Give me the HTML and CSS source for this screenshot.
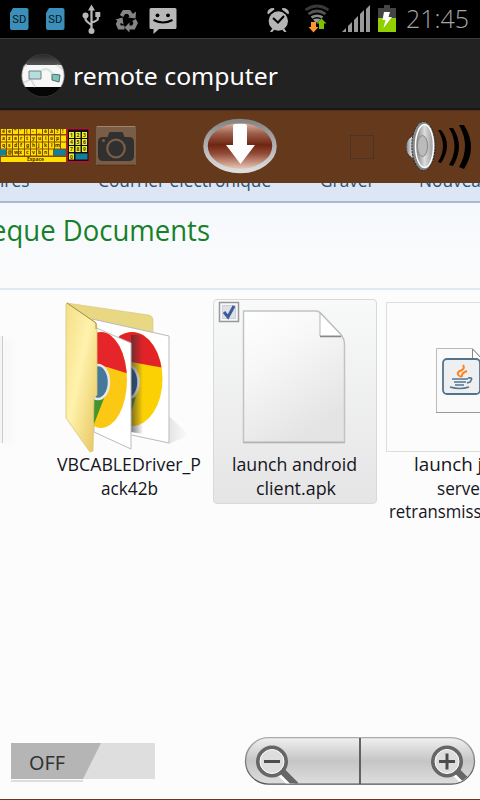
FILE: index.html
```html
<!DOCTYPE html>
<html lang="fr">
<head>
<meta charset="utf-8">
<title>remote computer</title>
<link rel="stylesheet" href="styles.css">
</head>
<body>
<div class="screen">
  <div class="status">
    <svg class="status-icons" width="190" height="38" viewBox="0 0 190 38">
      <g fill="#3b8fb8"><path d="M13 8h13.500q2 0 2 2v18q0 2-2 2h-14.500q-2 0-2-2v-15z"/><path d="M49 8h13.500q2 0 2 2v18q0 2-2 2h-14.500q-2 0-2-2v-15z"/></g>
      <g class="sd"><text x="12.300" y="22.800" textLength="14" lengthAdjust="spacingAndGlyphs">SD</text><text x="48.300" y="22.800" textLength="14" lengthAdjust="spacingAndGlyphs">SD</text></g>
      <g fill="none" stroke="#b8b8b8" stroke-width="2.200"><path d="M91.500 9v22M85.500 16v3q0 2 6 6M97.800 14v5q0 1.500-6 3.500"/></g>
      <g fill="#b8b8b8"><path d="M91.500 4.500l3.500 6h-7z"/><circle cx="85.500" cy="15.500" r="3"/><path d="M95.300 12h5v5h-5z"/><circle cx="91.500" cy="31" r="3"/></g>
      <g fill="none" stroke="#858585" stroke-width="4"><path d="M121.500 16l2.500-4h5l2.500 3.500M134 20l1.700 3-2.200 4.500h-5M124.500 27.500h-5l-1.500-3.500 1.500-3"/></g>
      <path d="M128 17.500l7.500 1 .5-7zM129.500 22.500v10l-5-5zM115.500 19.500l7-2 1 7z" fill="#858585"/>
      <path d="M151 8h24q1.500 0 1.500 1.500v18q0 1.500-1.500 1.500h-16l-5.500 5v-5h-2.500q-1.500 0-1.500-1.500v-18q0-1.500 1.500-1.500z" fill="#b8b8b8"/>
      <circle cx="157.500" cy="15.300" r="1.900"/><circle cx="168" cy="15.300" r="1.900"/><path d="M153.500 20q9.500 5 19 0" fill="none" stroke="#000" stroke-width="2"/>
    </svg>
    <svg class="status-icons" width="140" height="38" viewBox="260 0 140 38">
      <g fill="#b5b5b5"><circle cx="278.300" cy="21" r="9.700"/><path d="M267.300 13.500q0-5.500 6.500-5.500l.8 1.300-6.300 5zM289 13.500q0-5.500-6.500-5.500l-.8 1.300 6.300 5zM270 32l2.500-4 2 1.500-2.300 2.500zM286.500 32l-2.500-4-2 1.500 2.300 2.500z"/></g>
      <path d="M273 18l5 4.500 6-6.500" fill="none" stroke="#000" stroke-width="2"/>
      <g fill="none" stroke-width="2.700"><path d="M305.500 10q11.500-8 23 0" stroke="#393939"/><path d="M308.500 14q8.500-6 17 0" stroke="#555"/><path d="M311.500 17.500q5.500-3.500 11 0" stroke="#898989"/></g>
      <path d="M313 19.500q4-2 7.500 0l-3 3h-2z" fill="#999"/>
      <path d="M311 22h5v5h2.500l-5 5.500-5-5.500h2.500z" fill="#ff952f"/><path d="M319 29v-5.500h-2.500l5-5 5 5h-2.500v5.500z" fill="#80c000"/>
      <g fill="#999"><path d="M342 32l4-4v4zM348 32v-6l4-4v10zM354 32v-12l4-4v16zM360 32v-18l4-4v22zM366 32v-23l4-4v27z"/></g>
      <path d="M378 8h6v-3h6v3h6v10h-18z" fill="#444"/><path d="M378 18h18v14h-18z" fill="#90d000"/><path d="M384 12h6l-1.500 5h3.500l-8.500 11 2-8h-3z" fill="#fff"/>
    </svg>
    <svg class="clock" width="70" height="38"><text x="0" y="27.500" textLength="63" lengthAdjust="spacingAndGlyphs">21:45</text></svg>
  </div>

  <div class="titlebar">
    <svg width="44" height="46" viewBox="0 0 44 46">
      <defs><clipPath id="ball"><circle cx="22" cy="22.500" r="21.500"/></clipPath><linearGradient id="cap" x2="0" y2="1"><stop stop-color="#222"/><stop offset="1" stop-color="#555"/></linearGradient></defs>
      <g clip-path="url(#ball)"><path d="M0 0h44v46H0z" fill="#050505"/><path d="M0 0h44v12H0z" fill="url(#cap)"/><path d="M0 12h44v22H0z" fill="#f7f7f7"/>
      <path d="M0 14l6-2M0 31l10-5 4 8M36 12l8 6" stroke="#ddd" stroke-width="2" fill="none"/>
      <path d="M8 18h12v8H8z" fill="#b5dedc" stroke="#738086"/><path d="M31 21l8 1-1 7-7-2z" fill="#79c5b6" stroke="#4e6770"/><path d="M20 18q6-5 12 3" stroke="#cfe8dc" stroke-width="2" fill="none"/></g>
      <circle cx="22" cy="22.500" r="21.300" fill="none" stroke="#444" stroke-width=".6"/>
    </svg>
    <svg class="title" width="212" height="46"><text x="1" y="32" textLength="205" lengthAdjust="spacingAndGlyphs">remote computer</text></svg>
  </div>

  <div class="toolbar">
    <svg class="keyboard" width="90" height="38" viewBox="0 0 90 38">
      <path d="M0 2h67v33H0z" fill="#8a4a06"/><path d="M66.500 1h23v35h-23z" fill="#a51835"/><path d="M68 2.500h20.500v31.500H68z" fill="#151010"/>
      <g stroke="#ffe000" fill="none"><path d="M1 4.500h65" stroke-width="5" stroke-dasharray="5 1"/><path d="M1 11.500h65M1 18.500h65M1 25.500h52" stroke-width="6" stroke-dasharray="5 1"/><path d="M1 32.500h65" stroke-width="5"/><path d="M69 8h18.500M69 15h18.500M69 22h18.500M69 29.500h5" stroke-width="6" stroke-dasharray="5 1.500" stroke="#eef02a"/></g>
      <path d="M0 22.500h6v6H0zM53.500 22.500h12v6h-12zM75.500 26.500h12v6h-12z" fill="#12809c"/>
      <g class="keys"><text x="2 8 14 20 26 32 38 44 50 56 62" y="6">ée"'(-_èà?!</text><text x="2 8 14 20 26 32 38 45 50 56" y="13">azertyuiop</text><text x="2 8 14 20 26 32 38 44 51 55" y="20">qsdfghjklm</text><text x="7.500 14 19 26 32 38 44" y="27">@wxcvbn</text><text x="27" y="34">Espace</text><text x="70 76.500 83" y="10">123</text><text x="70 76.500 83" y="17">456</text><text x="70 76.500 83" y="24">789</text><text x="70" y="31.500">0</text></g>
    </svg>
    <svg class="camera" width="40" height="40" viewBox="0 0 40 40">
      <path d="M0 1q0-1 1-1h38q1 0 1 1v37q0 1-1 1H1q-1 0-1-1z" fill="#7a5d47"/><path d="M1 .5h38" stroke="#a08570"/><path d="M1 39.200h38" stroke="#573017"/>
      <path d="M2 16q0-5 5-5h4.500l2-5h13l2 5H33q5 0 5 5v14q0 5-5 5H7q-5 0-5-5z" fill="#303030"/><circle cx="20" cy="22.500" r="8.800" fill="none" stroke="#7a5d47" stroke-width="2.200"/><circle cx="7.500" cy="14.500" r="1.500" fill="#7a5d47"/>
    </svg>
    <svg class="download" width="78" height="58" viewBox="0 0 78 58">
      <defs><linearGradient id="red" x2="0" y2="1"><stop stop-color="#e8c5b5"/><stop offset=".25" stop-color="#9c5e49"/><stop offset=".48" stop-color="#6e2512"/><stop offset=".65" stop-color="#914b35"/><stop offset="1" stop-color="#f5d8ca"/></linearGradient><linearGradient id="silver" x2="0" y2="1"><stop stop-color="#858585"/><stop offset="1" stop-color="#dedede"/></linearGradient></defs>
      <ellipse cx="39" cy="28" rx="34.500" ry="25" fill="url(#red)" stroke="url(#silver)" stroke-width="4.500"/><path d="M32 8q0-2 2-2h10q2 0 2 2v19h8L39.500 46 25 27h7z" fill="#fff"/>
    </svg>
    <div class="checkbox"></div>
    <svg class="speaker" width="68" height="54" viewBox="0 0 68 54">
      <defs><linearGradient id="metal"><stop stop-color="#777"/><stop offset=".5" stop-color="#ddd"/><stop offset="1" stop-color="#999"/></linearGradient></defs>
      <path d="M10 14L5 17Q0 20 0 27t5 10l5 4z" fill="url(#metal)" stroke="#333" stroke-dasharray="2 1"/><ellipse cx="17.500" cy="26" rx="11.700" ry="24.500" fill="#888" stroke="#222" stroke-dasharray="2 1"/><ellipse cx="18.500" cy="26" rx="9" ry="21.500" fill="url(#metal)" stroke="#fff" stroke-width="1.500"/><ellipse cx="16.500" cy="26" rx="5" ry="10.500" fill="#bbb" stroke="#888"/>
      <g fill="#000"><path d="M32 10q10 16 0 32l3 1q12-18 0-33zM43 8q11 18 0 37l4 1q12-20 0-38zM53 5q12 21 0 42l5 2q14-22 0-44z"/></g>
    </svg>
  </div>

  <div class="remote">
    <div class="browserbar"><span class="cut1">ires</span><span class="cut2">Courrier électronique</span><span class="cut3">Graver</span><span class="cut4">Nouveau dossier</span></div>
    <div class="library"><svg width="230" height="55"><text x="-9" y="38" textLength="219" lengthAdjust="spacingAndGlyphs">eque Documents</text></svg></div>
    <div class="files">
      <div class="edge"></div>
      <div class="file folder">
        <svg width="150" height="156" viewBox="54 299 150 156">
          <defs><linearGradient id="yellow" x2="1" y2="1"><stop stop-color="#f4df87"/><stop offset=".45" stop-color="#fff2ac"/><stop offset="1" stop-color="#e6c35a"/></linearGradient><linearGradient id="shade"><stop stop-color="#e5e5e5"/><stop offset="1" stop-color="#fcfcfc"/></linearGradient><linearGradient id="fold"><stop stop-color="#333" stop-opacity=".65"/><stop offset="1" stop-color="#333" stop-opacity="0"/></linearGradient><clipPath id="back"><ellipse cx="132" cy="379" rx="30.500" ry="47"/></clipPath><clipPath id="front"><ellipse cx="101" cy="380" rx="26" ry="48"/></clipPath></defs>
          <path d="M169 416l20 19-20 9z" fill="url(#shade)"/>
          <path d="M67 303l82 12q4 1 4 5v110L95 425z" fill="#e8d783" stroke="#d2c17b" stroke-width=".5"/>
          <path d="M92 319l77 17v107l-75-16z" fill="#fff" stroke="#bbb"/>
          <g clip-path="url(#back)"><path d="M100 331h65v100h-65z" fill="#fcd104"/><path d="M100 331h65v37l-34-6-22 3z" fill="#e32228"/><ellipse cx="127" cy="382" rx="11.500" ry="17" fill="#245d9a" stroke="#eee" stroke-width="2.500"/><path d="M130 399l6-2-5 15z" fill="#4d9636"/></g><path d="M131 335h12v99l-12-2z" fill="url(#fold)"/>
          <path d="M94 327l37 16v106l-37-17z" fill="#fff" stroke="#bbb"/>
          <g clip-path="url(#front)"><path d="M75 331h54v100H75z" fill="#fbc914"/><path d="M75 331h54v43l-22-7-32-5z" fill="#e6252b"/><path d="M82 388h26l-14 36z" fill="#43932f"/><ellipse cx="98" cy="382" rx="11" ry="17" fill="#467999" stroke="#e8e8e8" stroke-width="2.500"/></g>
          <path d="M67 303l28 19q2 2 2 5v68l-3 3-1 53-3 1-24-34V304z" fill="url(#yellow)" stroke="#d9c575" stroke-width=".8"/><path d="M67 303l29 20v6" fill="none" stroke="#a99342"/>
        </svg>
        <svg class="caption" width="150" height="49"><text x="3" y="16" textLength="144" lengthAdjust="spacingAndGlyphs">VBCABLEDriver_P</text><text x="47" y="40" textLength="57" lengthAdjust="spacingAndGlyphs">ack42b</text></svg>
      </div>
      <div class="file selected">
        <svg width="162" height="154" viewBox="214 300 162 154">
          <defs><linearGradient id="page" x2=".5" y2="1"><stop stop-color="#fff"/><stop offset=".4" stop-color="#f7f7f7"/><stop offset="1" stop-color="#e4e4e4"/></linearGradient></defs>
          <path d="M243.500 311h72q4 0 7 4l18 19q4 5 4 10v98h-101z" fill="url(#page)" stroke="#c2c2c2" stroke-width="1.500"/><path d="M243 442.800h102" stroke="#aaa"/><path d="M320 313v23h22z" fill="#fff" stroke="#b5b5b5"/><path d="M320 336.500h21" stroke="#888" stroke-width="1.500"/>
          <path d="M219.500 302.500h19v19h-19z" fill="#f8f8f8" stroke="#999" stroke-width="1.500"/><path d="M222.500 305.500h13v13h-13z" fill="#dde1e7" stroke="#ccd0d7"/><path d="M224 312l4 5 6-11" fill="none" stroke="#3e5b9c" stroke-width="3"/>
        </svg>
        <svg class="caption" width="162" height="49"><text x="18" y="17" textLength="125" lengthAdjust="spacingAndGlyphs">launch android</text><text x="42" y="41" textLength="80" lengthAdjust="spacingAndGlyphs">client.apk</text></svg>
      </div>
      <div class="file java">
        <div class="thumb"><svg width="150" height="148" viewBox="387 303 150 148">
          <path d="M436.500 348.500h36l16 17v47h-52z" fill="#fafafa" stroke="#bbb"/><path d="M436 412.500h52" stroke="#999"/><path d="M472.500 349v17h16z" fill="#fff" stroke="#888"/>
          <rect x="443" y="359" width="37" height="35" rx="4" fill="#eeeff0" stroke="#53738b" stroke-width="1.800"/><path d="M461 377q-7-4 1-7 3-2 1-5M462 377q-1-4 5-6" fill="none" stroke="#ff821e" stroke-width="2"/><path d="M452 379h16M454 382h12M455 385h9M468 378q6-1 2 4l-3 1M450 387q10 3 19 0" fill="none" stroke="#527691" stroke-width="1.700"/>
        </svg></div>
        <svg class="caption" width="150" height="76"><text x="28" y="19" textLength="124" lengthAdjust="spacingAndGlyphs">launch java pc</text><text x="51" y="43" textLength="50" lengthAdjust="spacingAndGlyphs">server</text><text x="3" y="66" textLength="142" lengthAdjust="spacingAndGlyphs">retransmission.jar</text></svg>
      </div>
    </div>
    <div class="controls">
      <div class="switch"><svg width="144" height="39"><path d="M0 0h144v36H0z" fill="#dedede"/><path d="M0 0h90L72 36H0z" fill="#b5b5b5"/><path d="M0 38h72" stroke="#ddd" stroke-width="2"/><text x="18" y="27" textLength="36" lengthAdjust="spacingAndGlyphs">OFF</text></svg></div>
      <svg class="zoom" width="232" height="50" viewBox="244 735 232 50">
        <defs><linearGradient id="button" x2="0" y2="1"><stop stop-color="#f0f0f0"/><stop offset=".5" stop-color="#c5c5c5"/><stop offset="1" stop-color="#dedede"/></linearGradient><linearGradient id="border" x2="0" y2="1"><stop stop-color="#aaa"/><stop offset="1" stop-color="#555"/></linearGradient><clipPath id="pill"><rect x="246" y="737" width="228" height="45.500" rx="22.700"/></clipPath></defs>
        <rect x="245.500" y="736.700" width="229" height="46.500" rx="23.200" fill="url(#button)" stroke="url(#border)" stroke-width="1.300"/><path d="M360 737v46" stroke="#555" stroke-width="1.800"/>
        <g clip-path="url(#pill)"><path d="M281 772l12 12M456 772l14 14" stroke="#fff" stroke-width="8"/><path d="M282 770l14 14M457 770l14 14" stroke="#666" stroke-width="6.500"/><g fill="#ddd"><circle cx="272" cy="760.500" r="14" stroke="#666" stroke-width="4"/><circle cx="447" cy="760.500" r="14" stroke="#666" stroke-width="4"/></g><g fill="none" stroke="#fff"><circle cx="272" cy="760.500" r="12"/><circle cx="447" cy="760.500" r="12"/></g><path d="M264 760.500h16M439 760.500h16M447 752.500v16" stroke="#4c4c4c" stroke-width="3"/></g>
      </svg>
    </div>
  </div>
</div>
</body>
</html>
```
FILE: styles.css
```css
* { box-sizing: border-box; }
body { margin: 0; background: #fcfcfc; font-family: "Open Sans", "Noto Sans", sans-serif; }
svg { display: block; flex: none; }
.screen { width: 480px; height: 800px; overflow: hidden; display: flex; flex-direction: column; }
.status { height: 38px; background: #000; display: flex; }
.status-icons:nth-child(2) { margin-left: 70px; }
.sd text { font: 10.500px Roboto, sans-serif; fill: #08161d; }
.clock { margin-left: 6px; }
.clock text { font: 300 26px "Open Sans", "Noto Sans", sans-serif; fill: #a5a5a5; }
.titlebar { height: 72px; display: flex; padding: 14px 0 0 21px; background: #222; border-top: 1px solid #3b3b3b; border-bottom: 2px solid #191919; }
.title { margin-left: 7px; }
.title text { font: 24px "Noto Sans", sans-serif; fill: #fff; }
.toolbar { height: 73px; background: #65391b; display: flex; align-items: center; border-top: 1px solid #523019; overflow: hidden; }
.keyboard { margin-bottom: 3px; }
.keys text { font: bold 5px "Noto Sans", sans-serif; fill: #4a3206; }
.camera { margin: 0 0 2px 6px; }
.download { margin-left: 65px; }
.checkbox { width: 24px; height: 24px; border: 1px solid #483527; margin: 0 0 1px 71px; }
.speaker { margin: 0 0 1px 32px; }
.remote { height: 617px; background: #fcfcfc; border-bottom: 1px solid #65391b; overflow: hidden; }
.browserbar { height: 20px; background: #dce6f4; border-bottom: 2px solid #a9bacf; display: flex; overflow: hidden; font-size: 17.300px; line-height: 24px; color: #315071; white-space: nowrap; }
.browserbar span { margin-top: -14px; flex: none; }
.cut1 { width: 98px; }
.cut2 { width: 222px; }
.cut3 { width: 99px; }
.library { height: 87px; border-bottom: 2px solid #dfe9f5; background: linear-gradient(#f5f8fc, #fcfcfc); }
.library text { font: 29px "Open Sans", "Noto Sans", sans-serif; fill: #17802b; }
.files { height: 446px; display: flex; padding-top: 9px; }
.edge { flex: none; width: 3px; height: 107px; margin: 37px 51px 0 0; border-right: 1px solid #ccc; background: #f5f5f5; box-shadow: 6px 3px 9px #eee; }
.file { flex: none; height: 205px; }
.folder { width: 150px; }
.selected { width: 164px; margin-left: 9px; border: 1px solid #d9d9d9; border-radius: 4px; background: linear-gradient(#f8f9f9, #e5e5e5); }
.java { width: 152px; margin-left: 9px; padding-top: 3px; }
.thumb { height: 150px; border: 1px solid #ddd; }
.caption text { font: 18px "Open Sans", "Noto Sans", sans-serif; fill: #15151d; }
.controls { height: 61px; display: flex; padding-left: 11px; }
.switch { margin: 7px 89px 0 0; }
.switch text { font: 19px "Noto Sans", sans-serif; fill: #333; }
```
